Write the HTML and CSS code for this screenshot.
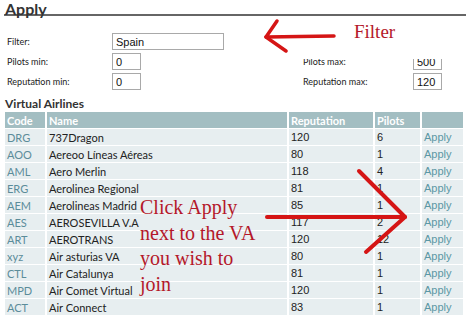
FILE: index.html
```html
<!DOCTYPE html>
<html>
<head>
<meta charset="utf-8">
<link rel="stylesheet" href="styles.css">
</head>
<body>
<div class="page">
  <h1 class="title">Apply</h1>
  <form class="filters">
    <label class="lbl">Filter:</label>
    <div class="field"><input class="inp wide" value="Spain"></div>
    <span></span><span></span>
    <label class="lbl">Pilots min:</label>
    <div class="field"><input class="inp small" value="0"></div>
    <label class="lbl">Pilots max:</label>
    <div class="field"><input class="inp small" value="500"></div>
    <label class="lbl">Reputation min:</label>
    <div class="field"><input class="inp small" value="0"></div>
    <label class="lbl">Reputation max:</label>
    <div class="field"><input class="inp small" value="120"></div>
  </form>
  <h2 class="subtitle">Virtual Airlines</h2>
  <table class="va">
    <thead>
      <tr><th class="c-code">Code</th><th class="c-name">Name</th><th class="c-rep">Reputation</th><th class="c-pil">Pilots</th><th class="c-app"></th></tr>
    </thead>
    <tbody>
      <tr><td class="code">DRG</td><td class="name">737Dragon</td><td class="num">120</td><td class="num">6</td><td class="app">Apply</td></tr>
      <tr><td class="code">AOO</td><td class="name">Aereoo Líneas Aéreas</td><td class="num">80</td><td class="num">1</td><td class="app">Apply</td></tr>
      <tr><td class="code">AML</td><td class="name">Aero Merlin</td><td class="num">118</td><td class="num">4</td><td class="app">Apply</td></tr>
      <tr><td class="code">ERG</td><td class="name">Aerolinea Regional</td><td class="num">81</td><td class="num">1</td><td class="app">Apply</td></tr>
      <tr><td class="code">AEM</td><td class="name">Aerolineas Madrid</td><td class="num">85</td><td class="num">1</td><td class="app">Apply</td></tr>
      <tr><td class="code">AES</td><td class="name">AEROSEVILLA V.A</td><td class="num">117</td><td class="num">2</td><td class="app">Apply</td></tr>
      <tr><td class="code">ART</td><td class="name">AEROTRANS</td><td class="num">120</td><td class="num">12</td><td class="app">Apply</td></tr>
      <tr><td class="code">xyz</td><td class="name">Air asturias VA</td><td class="num">80</td><td class="num">1</td><td class="app">Apply</td></tr>
      <tr><td class="code">CTL</td><td class="name">Air Catalunya</td><td class="num">81</td><td class="num">1</td><td class="app">Apply</td></tr>
      <tr><td class="code">MPD</td><td class="name">Air Comet Virtual</td><td class="num">120</td><td class="num">1</td><td class="app">Apply</td></tr>
      <tr><td class="code">ACT</td><td class="name">Air Connect</td><td class="num">83</td><td class="num">1</td><td class="app">Apply</td></tr>
    </tbody>
  </table>

  <div class="note-box"></div>
  <div class="note note-filter">Filter</div>
  <div class="note note-click">Click Apply<br>next to the VA<br>you wish to<br>join</div>
  <svg class="arrows" width="474" height="320" viewBox="0 0 474 320">
    <g fill="none" stroke="#d51515" stroke-linecap="round" stroke-linejoin="round">
      <path d="M334 36 L266 37" stroke-width="3.5"/>
      <path d="M277 21 L266 37 L286 51" stroke-width="3.5"/>
      <path d="M267 217 L405 217" stroke-width="4"/>
      <path d="M359 171 L405 217 L366 252" stroke-width="4"/>
    </g>
  </svg>
</div>
</body>
</html>
```
FILE: styles.css
```css
html, body {
  margin: 0;
  padding: 0;
  background: #ffffff;
}
.page {
  position: relative;
  width: 474px;
  height: 320px;
  overflow: hidden;
  font-family: Lato, "Open Sans", sans-serif;
  color: #222;
}
.title {
  margin: 0 0 0 4px;
  width: 461px;
  padding-left: 1px;
  font-size: 16px;
  font-weight: 700;
  line-height: 17px;
  height: 14px;
  overflow: visible;
  color: #333;
  border-bottom: 2px solid #666;
}
.filters {
  margin: 17px 0 0 0;
  padding-left: 7px;
  display: grid;
  grid-template-columns: 105px 191px 110px 40px;
  grid-auto-rows: 17px;
  row-gap: 3px;
  align-items: center;
}
.lbl {
  font-size: 9px;
  color: #222;
}
.field {
  display: flex;
  height: 17px;
}
.inp {
  box-sizing: border-box;
  height: 17px;
  margin: 0;
  border: 1px solid #a9a9a9;
  background: #fff;
  font-family: "Liberation Sans", Arial, sans-serif;
  font-size: 11px;
  padding: 0 3px;
  color: #111;
}
.wide { width: 112px; }
.small { width: 29px; }
.subtitle {
  margin: 7px 0 0 5px;
  font-size: 12px;
  font-weight: 700;
  line-height: 14px;
  color: #333;
}
.va {
  margin: 0 0 0 3px;
  border-collapse: separate;
  border-spacing: 2px 1px;
  table-layout: fixed;
}
.va th, .va td {
  height: 16px;
  padding: 0 0 0 2px;
  text-align: left;
  white-space: nowrap;
  overflow: hidden;
  box-sizing: border-box;
}
.va th {
  background: #a3bec2;
  color: #fff;
  font-size: 11px;
  font-weight: 700;
}
.va td {
  background: #e7eef0;
  font-size: 11px;
}
.c-code { width: 40px; }
.c-name { width: 240px; }
.c-rep { width: 84px; }
.c-pil { width: 45px; }
.c-app { width: 41px; }
.code { color: #5b8c9a; }
.name { color: #222; }
.num {
  font-family: "Liberation Sans", Arial, sans-serif;
  font-size: 10px;
  color: #222;
}
.app {
  font-family: "Liberation Sans", Arial, sans-serif;
  color: #5b97a4;
  font-size: 10px;
}
.note-box {
  position: absolute;
  left: 240px;
  top: 18px;
  width: 234px;
  height: 41px;
  background: #fff;
}
.note {
  position: absolute;
  font-family: "Liberation Serif", "Times New Roman", serif;
  color: #b4182a;
}
.note-filter {
  left: 354px;
  top: 22px;
  font-size: 19px;
  line-height: 20px;
}
.note-click {
  left: 140px;
  top: 195px;
  font-size: 20px;
  line-height: 25.7px;
}
.arrows {
  position: absolute;
  left: 0;
  top: 0;
  pointer-events: none;
}
```
